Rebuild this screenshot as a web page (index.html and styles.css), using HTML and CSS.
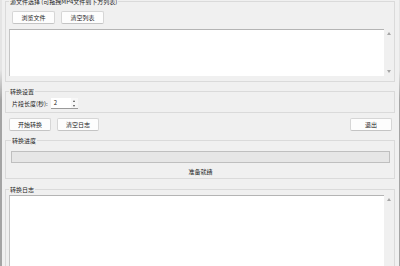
FILE: index.html
```html
<!DOCTYPE html>
<html lang="zh-CN">
<head>
<meta charset="utf-8">
<title>MP4 转换</title>
<link rel="stylesheet" href="styles.css">
</head>
<body>
<div class="app">
  <fieldset class="group g-source">
    <legend>源文件选择 (可拖拽MP4文件到下方列表)</legend>
    <div class="btn-row">
      <button class="btn" type="button">浏览文件</button>
      <button class="btn" type="button">清空列表</button>
    </div>
    <div class="list-row">
      <div class="listbox"></div>
      <div class="vscroll">
        <span class="arr up"></span>
        <span class="arr down"></span>
      </div>
    </div>
  </fieldset>

  <fieldset class="group g-settings">
    <legend>转换设置</legend>
    <div class="setting-row">
      <span class="lbl">片段长度(秒):</span>
      <div class="spin">
        <span class="spin-val">2</span>
        <span class="spin-btns">
          <span class="sarr up"></span>
          <span class="sarr down"></span>
        </span>
      </div>
    </div>
  </fieldset>

  <div class="action-row">
    <button class="btn" type="button">开始转换</button>
    <button class="btn" type="button">清空日志</button>
    <span class="spacer"></span>
    <button class="btn" type="button">退出</button>
  </div>

  <fieldset class="group g-progress">
    <legend>转换进度</legend>
    <div class="progress"></div>
    <div class="status">准备就绪</div>
  </fieldset>

  <fieldset class="group g-log">
    <legend>转换日志</legend>
    <div class="list-row">
      <div class="logbox"></div>
      <div class="vscroll log-scroll">
        <span class="arr up"></span>
      </div>
    </div>
  </fieldset>
</div>
</body>
</html>
```

FILE: styles.css
```css
html, body {
  margin: 0;
  padding: 0;
}
body {
  width: 400px;
  height: 266px;
  overflow: hidden;
  background:
    linear-gradient(to bottom, #e4e4e4 0, #e4e4e4 70px, #a4a4a4 100px) left top / 2px 100% no-repeat,
    linear-gradient(to bottom, #e4e4e4 0, #e4e4e4 70px, #a4a4a4 100px) right top / 1px 100% no-repeat,
    #f0f0f0;
  font-family: "Noto Sans CJK SC", "Noto Sans", sans-serif;
  font-size: 6px;
  color: #1c1c1c;
}
.app {
  display: flex;
  flex-direction: column;
}
.group {
  margin: 0 5px;
  padding: 0 1px 0 3px;
  border: 1px solid #dadada;
  min-width: 0;
}
.group legend {
  padding: 0 1px;
  margin: 0;
  line-height: 7px;
  height: 7px;
  font-size: 6px;
  color: #1c1c1c;
}
.g-source {
  margin-top: -2px;
  padding-top: 6px;
  padding-bottom: 5px;
}
.btn-row {
  display: flex;
  gap: 6px;
  margin-left: 3px;
}
.btn,
.btn:hover,
.btn:focus,
.btn:active {
  -webkit-appearance: none;
  appearance: none;
  outline: none;
  width: 43px;
  height: 13px;
  padding: 0;
  margin: 0;
  font-family: inherit;
  font-size: 6px;
  line-height: 11px;
  color: #1c1c1c;
  background: #fdfdfd;
  border: 1px solid #d6d6d6;
  border-bottom-color: #c4c4c4;
  border-radius: 2px;
}
.list-row {
  display: flex;
  margin-top: 5px;
}
.listbox {
  flex: 0 0 375px;
  height: 47px;
  box-sizing: border-box;
  background: #fff;
  border-top: 1px solid #b4b4b4;
  border-left: 1px solid #c4c4c4;
}
.vscroll {
  flex: 1;
  position: relative;
}
.arr {
  position: absolute;
  left: 3px;
  width: 0;
  height: 0;
  border-left: 2px solid transparent;
  border-right: 2px solid transparent;
}
.arr.up {
  top: 3px;
  border-bottom: 3px solid #a6a6a6;
}
.arr.down {
  bottom: 3px;
  border-top: 3px solid #a6a6a6;
}

.g-settings {
  margin-top: 6px;
  padding-top: 3px;
  padding-bottom: 3px;
}
.setting-row {
  display: flex;
  align-items: center;
  gap: 3px;
  margin-left: 3px;
  height: 11px;
}
.lbl {
  line-height: 11px;
}
.spin {
  display: flex;
  width: 27px;
  height: 11px;
  background: #fff;
  box-sizing: border-box;
  border-bottom: 1px solid #9a9a9a;
}
.spin-val {
  flex: 1;
  padding-left: 3px;
  line-height: 10px;
}
.spin-btns {
  width: 7px;
  display: flex;
  flex-direction: column;
  justify-content: space-around;
  align-items: center;
  background: #f7f7f7;
}
.sarr {
  width: 0;
  height: 0;
  border-left: 1.5px solid transparent;
  border-right: 1.5px solid transparent;
}
.sarr.up {
  border-bottom: 2px solid #505050;
}
.sarr.down {
  border-top: 2px solid #505050;
}

.action-row {
  display: flex;
  gap: 6px;
  margin: 5px 8px 0 9px;
}
.action-row .btn {
  width: 42px;
}
.spacer {
  flex: 1;
}

.g-progress {
  margin-top: 6px;
  padding: 7px 4px 1px 5px;
}
.progress {
  height: 12px;
  box-sizing: border-box;
  background: #e6e6e6;
  border: 1px solid #bfbfbf;
}
.status {
  margin-top: 4px;
  line-height: 10px;
  text-align: center;
}

.g-log {
  margin-top: 7px;
  padding-top: 0;
  padding-bottom: 0;
}
.g-log .list-row {
  margin-top: 2px;
}
.logbox {
  flex: 0 0 375px;
  height: 90px;
  box-sizing: border-box;
  background: #fff;
  border-top: 1px solid #b4b4b4;
  border-left: 1px solid #c4c4c4;
}
.log-scroll .arr.up {
  top: 3px;
}
```
